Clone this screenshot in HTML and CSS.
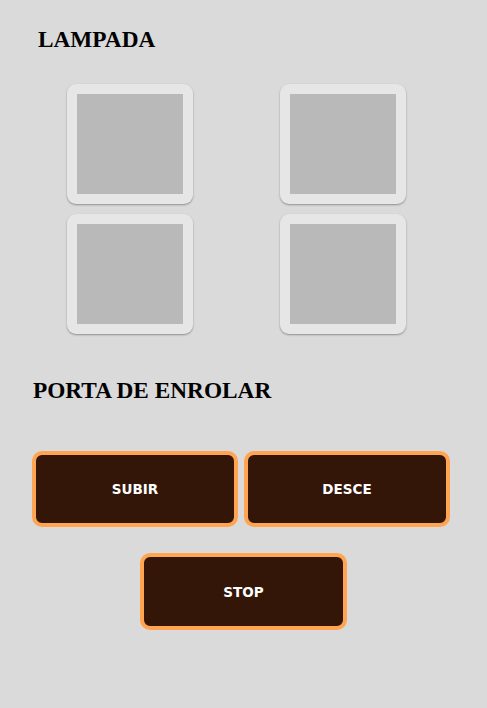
FILE: index.html
```html
<!DOCTYPE html>
<html lang="pt">
<head>
<meta charset="utf-8">
<title>Controle</title>
<link rel="stylesheet" href="styles.css">
</head>
<body>
<div class="page">
  <h2 class="title title-lamp">LAMPADA</h2>
  <div class="lamp-grid">
    <div class="tile"><div class="tile-inner"></div></div>
    <div class="tile"><div class="tile-inner"></div></div>
    <div class="tile"><div class="tile-inner"></div></div>
    <div class="tile"><div class="tile-inner"></div></div>
  </div>
  <h2 class="title title-door">PORTA DE ENROLAR</h2>
  <div class="btn-row">
    <button class="btn">SUBIR</button>
    <button class="btn">DESCE</button>
  </div>
  <div class="btn-row-stop">
    <button class="btn btn-stop">STOP</button>
  </div>
</div>
</body>
</html>
```
FILE: styles.css
```css
html, body {
  margin: 0;
  padding: 0;
  background: #dadada;
}
.page {
  width: 487px;
  height: 708px;
  display: flex;
  flex-direction: column;
  align-items: flex-start;
  background: #dadada;
}
.title {
  margin: 0;
  font-family: "Liberation Serif", "Times New Roman", serif;
  font-size: 23.3px;
  font-weight: bold;
  line-height: 27px;
  color: #000;
}
.title-lamp {
  margin-top: 26px;
  margin-left: 38px;
}
.title-door {
  margin-top: 43px;
  margin-left: 33px;
}
.lamp-grid {
  margin-top: 31px;
  margin-left: 67px;
  display: grid;
  grid-template-columns: 126px 126px;
  column-gap: 87px;
  row-gap: 10px;
}
.tile {
  width: 126px;
  height: 120px;
  box-sizing: border-box;
  padding: 10px;
  background: #e6e6e6;
  border-radius: 9px;
  box-shadow: 0 1px 2px rgba(0, 0, 0, 0.35);
}
.tile-inner {
  width: 106px;
  height: 100px;
  background: #b9b9b9;
}
.btn-row {
  margin-top: 47px;
  margin-left: 32px;
  display: flex;
  gap: 6px;
}
.btn-row-stop {
  margin-top: 26px;
  margin-left: 140px;
}
.btn {
  width: 206px;
  height: 76px;
  box-sizing: border-box;
  border: 4px solid #ffa552;
  border-radius: 10px;
  background: #341608;
  color: #fff;
  font-family: "DejaVu Sans", Verdana, sans-serif;
  font-weight: bold;
  font-size: 13.5px;
  padding: 0;
  cursor: pointer;
}
.btn-stop {
  width: 207px;
  height: 77px;
}
```
